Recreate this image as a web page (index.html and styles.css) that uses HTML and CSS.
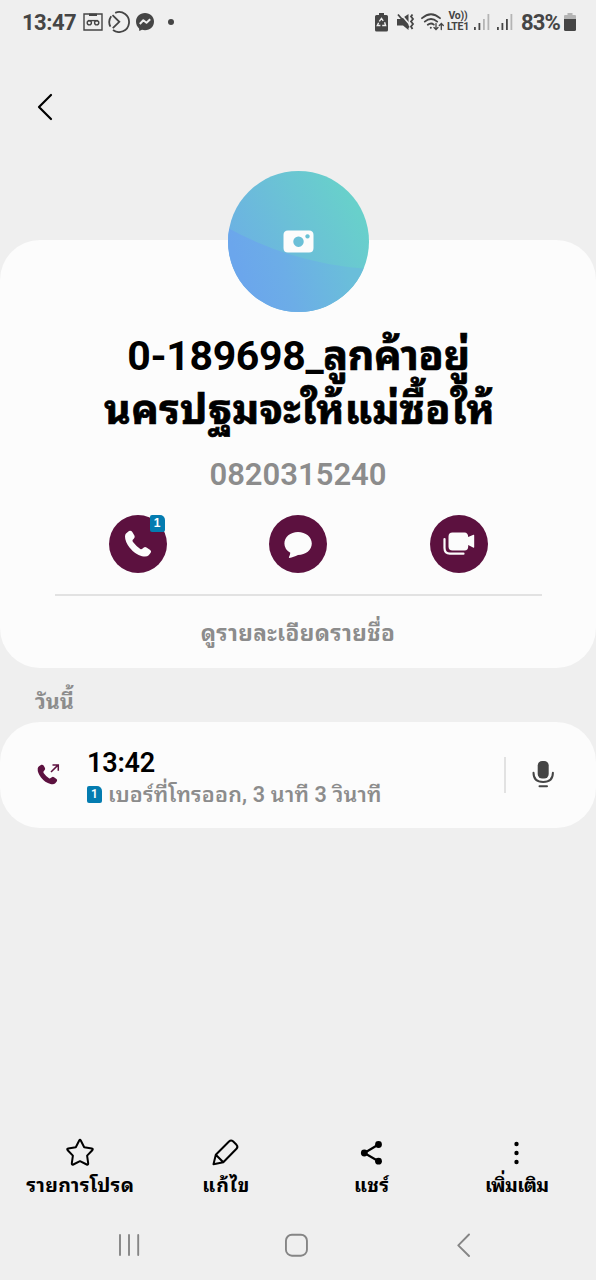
FILE: index.html
```html
<!DOCTYPE html>
<html lang="th">
<head>
  <meta charset="UTF-8">
  <title>รายละเอียดการโทร</title>
  <meta name="viewport" content="width=device-width, initial-scale=1.0">
  <link rel="stylesheet" href="styles.css">
</head>
<body>
  <!-- status bar -->
  <div class="status">
    <div class="status-left">
      <span class="clock">13:47</span>
      <svg class="ic-voicemail" width="20" height="18" viewBox="0 0 20 18" fill="none" stroke="#454545" stroke-width="1.4">
        <path d="M1 1H19V17H1Z"/>
        <path d="M6 1.8H14" stroke-width="2.4"/>
        <circle cx="6.3" cy="9.8" r="2.1"/><circle cx="13.7" cy="9.8" r="2.1"/>
        <path d="M5 7.6H15"/>
      </svg>
      <svg class="ic-ring" width="22" height="22" viewBox="0 0 22 22" fill="none" stroke="#454545" stroke-width="1.8">
        <path d="M7.2 1.8A10 10 0 1 1 5 19"/>
        <path d="M2.4 15.6A10 10 0 0 1 3.2 5.2"/>
        <path d="M4.5 4.2L11.3 10.8L4.8 17.2"/>
      </svg>
      <svg class="ic-messenger" width="20" height="20" viewBox="0 0 20 20">
        <path fill="#454545" d="M10 1C4.7 1 1 4.6 1 9.6c0 3 1.2 5.2 3.1 6.8L4.3 19l2.7-1.2c1 .3 2 .4 3 .4 5.3 0 9-3.6 9-8.6S15.3 1 10 1Z"/>
        <path fill="none" stroke="#efefef" stroke-width="2" stroke-linejoin="round" d="M4.8 12L8.3 8.2L11.5 10.8L15.2 7.2"/>
      </svg>
      <span class="dot"></span>
    </div>
    <div class="status-right">
      <svg class="ic-saver" width="13" height="19" viewBox="0 0 13 19">
        <path fill="#454545" d="M4 0h5v2h2.5q1.5 0 1.5 1.5v13.5q0 1.5-1.5 1.5h-10q-1.5 0-1.5-1.5V3.5Q0 2 1.5 2H4Z"/>
        <path fill="none" stroke="#efefef" stroke-width="1.4" d="M4.3 8.3L6.5 5.4L8.2 7.8M9.600 9.300l1 3.200H7.200M5.400 12.500H2.300L3.600 9.800"/>
      </svg>
      <svg class="ic-mute" width="18" height="18" viewBox="0 0 18 18">
        <path fill="#454545" d="M0 6h4L11.500 1V17L6 12.500H0Z"/>
        <path fill="none" stroke="#efefef" stroke-width="1.6" d="M2.800 0L14 13"/>
        <path fill="none" stroke="#454545" stroke-width="1.8" d="M1 1.500L12 14.500M15.500 1.500l-1.500 2 2 2.500-2 2.500 2 2.500-2 2.500 1.500 2.500"/>
      </svg>
      <svg class="ic-wifi" width="23" height="18" viewBox="0 0 23 18" fill="none" stroke="#454545" stroke-width="1.8" stroke-linecap="round">
        <path d="M1 5.200Q10 -2.800 19 5.200M3.800 8.600Q10 3.300 16.200 8.600M6.800 11.800Q10 9.200 12.800 11.600"/>
        <circle cx="9.8" cy="14.7" r="1" fill="#454545" stroke="none"/>
        <path stroke-width="1.3" d="M15 10.500v6M13 14.500l2 2 2-2M20.300 16.500v-6M18.300 12.500l2-2 2 2"/>
      </svg>
      <div class="volte"><span>Vo))</span><span>LTE1</span></div>
      <svg class="ic-signal" width="16" height="18" viewBox="0 0 16 18" fill="#454545">
        <path d="M0 14h1.800v3H0ZM4.500 10h1.800v7h-1.800Z"/>
        <path fill="#b4b4b4" d="M9 6h1.800v11H9ZM13.500 1h1.800v16h-1.800Z"/>
      </svg>
      <svg class="ic-signal" width="16" height="18" viewBox="0 0 16 18" fill="#454545">
        <path d="M0 14h1.800v3H0ZM4.500 10h1.800v7h-1.800ZM9 6h1.800v11H9Z"/>
        <path fill="#b4b4b4" d="M13.500 1h1.800v16h-1.800Z"/>
      </svg>
      <span class="percent">83%</span>
      <svg width="12" height="19" viewBox="0 0 12 19">
        <path fill="#b4b4b4" d="M3.500 0h5v2H11q1 0 1 1v3H0V3q0-1 1-1h2.500Z"/>
        <path fill="#454545" d="M0 6h12v10.500q0 1.500-1.500 1.500h-9Q0 18 0 16.500Z"/>
      </svg>
    </div>
  </div>

  <div class="topbar">
    <svg width="20" height="30" viewBox="0 0 20 30" fill="none" stroke="#000" stroke-width="2.2" stroke-linecap="round" stroke-linejoin="round">
      <path d="M15 3L3 15L15 27"/>
    </svg>
  </div>

  <!-- contact card -->
  <div class="card contact">
    <div class="avatar">
      <svg width="141" height="141" viewBox="0 0 141 141">
        <defs>
          <linearGradient id="sky" x1="0.1" y1="0.7" x2="0.9" y2="0.25">
            <stop offset="0" stop-color="#6cb0e4"/>
            <stop offset="0.5" stop-color="#6bc0d7"/>
            <stop offset="1" stop-color="#68d0cb"/>
          </linearGradient>
          <linearGradient id="sea" gradientUnits="userSpaceOnUse" x1="10" y1="95" x2="110" y2="65">
            <stop offset="0" stop-color="#6ba6ec"/>
            <stop offset="0.4" stop-color="#6cadE7"/>
            <stop offset="1" stop-color="#6abedA"/>
          </linearGradient>
          <clipPath id="round"><circle cx="70.5" cy="70.5" r="70.5"/></clipPath>
        </defs>
        <g clip-path="url(#round)">
          <path fill="url(#sky)" d="M0 0h141v141H0Z"/>
          <path fill="url(#sea)" d="M0 57Q65 93 141 98V141H0Z"/>
        </g>
        <path fill="#fcfcfc" fill-rule="evenodd" d="M60 59.500H81Q85.500 59.500 85.500 64V77Q85.500 81.500 81 81.500H60Q55.500 81.500 55.500 77V64Q55.500 59.500 60 59.500ZM70.500 65.500a5.200 5.200 0 1 0 .01 0ZM79.500 63.200a2.200 2.200 0 1 0 .01 0Z"/>
      </svg>
    </div>
    <h1 class="name"><span class="name-a">0-189698_<span class="thai">ลูกค้าอยู่</span></span><span class="name-b thai">นครปฐมจะให้แม่ซื้อให้</span></h1>
    <p class="number">0820315240</p>
    <div class="actions">
      <button class="round-btn">
        <svg width="28" height="28" viewBox="0 0 28 28">
          <path fill="#fcfcfc" d="M2 3.500L5 1Q7 .1 8.300 2L10.400 5.500Q11.300 7.200 10 8.500L8.600 10Q8.200 10.800 9 12Q12 16 16.300 18.900Q17.400 19.500 18.300 18.800L19.800 17.500Q21 16.600 22.500 17.500L26.200 19.900Q27.700 21 26.700 22.800L24.700 25.300Q22.700 27.300 18 26.200Q11 24.500 5.500 17.500Q1 11.500 1 6.500Q1 4.500 2 3.500Z"/>
        </svg>
        <span class="sim sim-badge">1</span>
      </button>
      <button class="round-btn">
        <svg width="28" height="28" viewBox="0 0 28 28">
          <path fill="#fcfcfc" d="M14 2C21.700 2 27.800 7 27.800 13.500S21.700 25 14 25C11 26.300 8.300 27.600 5.300 27.900Q4.600 27.800 5 27.100Q6 25.500 6.300 22.800Q.4 19.300 .4 13.500C.4 7 6.300 2 14 2Z"/>
        </svg>
      </button>
      <button class="round-btn">
        <svg width="32" height="26" viewBox="0 0 32 26">
          <path fill="#fcfcfc" d="M9.500 1.500H21.500Q25 1.500 25.200 6L30.500 3.800Q31.200 3.600 31.200 4.500V16Q31.200 17 30.500 16.700L25.200 14V15.500Q25.200 19.500 21.500 19.500H9.500Q5.500 19.500 5.500 15.500V5.500Q5.500 1.500 9.500 1.500Z"/>
          <path fill="none" stroke="#fcfcfc" stroke-width="2.2" stroke-linecap="round" d="M1.500 8V17Q1.500 22.700 7 22.700H20.500"/>
        </svg>
      </button>
    </div>
    <a class="details">ดูรายละเอียดรายชื่อ</a>
  </div>

  <h2 class="day">วันนี้</h2>

  <!-- call log -->
  <div class="card log">
    <svg class="log-icon" width="24" height="22" viewBox="0 0 24 22">
      <path fill="#5c113f" d="M2 2.300L4.300 .8Q5.700 .3 6.600 1.600L8 4Q8.500 5.300 7.500 6.300L6.500 7.400Q6.100 8.200 6.800 9.200Q9 12.300 12 14.200Q12.900 14.700 13.700 14L14.800 13.200Q15.900 12.500 17 13.200L19.500 14.900Q20.600 15.900 19.900 17.200L18.300 19.300Q16.700 20.800 13.500 20Q8 18.500 4 13.500Q.3 8.500 .7 4.500Q.9 3 2 2.300Z"/>
      <path fill="none" stroke="#5c113f" stroke-width="1.5" d="M14 8L21.200 .9M15.500 1H21.300V6.800"/>
    </svg>
    <div class="log-text">
      <div class="log-time">13:42</div>
      <div class="log-info"><span class="sim">1</span><span class="log-desc">เบอร์ที่โทรออก, 3 นาที 3 วินาที</span></div>
    </div>
    <div class="log-mic">
      <svg width="24" height="30" viewBox="0 0 24 30">
        <rect x="6.700" y="1" width="11" height="17.500" rx="4.500" fill="#454545"/>
        <path fill="none" stroke="#454545" stroke-width="2" stroke-linecap="round" d="M2.500 12.800Q2.500 22 12.200 22T21.900 12.800M8.500 26.300H16"/>
      </svg>
    </div>
  </div>

  <!-- bottom actions -->
  <div class="toolbar">
    <div class="tool">
      <svg width="30" height="30" viewBox="0 0 30 30" fill="none" stroke="#000" stroke-width="2" stroke-linejoin="round">
        <path d="M14.100 2.700Q15 1 15.900 2.700L19.200 9.300L26.800 10.500Q28.500 10.900 27.300 12.200L22.100 17.600L23.200 25.300Q23.300 27.200 21.700 26.500L15 23.200L8.300 26.500Q6.700 27.200 6.800 25.300L7.900 17.600L2.700 12.200Q1.500 10.900 3.200 10.500L10.800 9.300Z"/>
      </svg>
      <span class="tool-fav">รายการโปรด</span>
    </div>
    <div class="tool">
      <svg width="30" height="30" viewBox="0 0 30 30" fill="none" stroke="#000" stroke-width="2" stroke-linejoin="round">
        <path d="M3.500 26.200L5.800 16.800L19 3.500Q21 1.700 23 3.300L26.500 6.800Q28.300 8.800 26.500 10.700L13.300 24.300ZM5.800 16.800L13.300 24.300"/>
      </svg>
      <span class="tool-edit">แก้ไข</span>
    </div>
    <div class="tool">
      <svg width="30" height="30" viewBox="0 0 30 30">
        <path fill="none" stroke="#000" stroke-width="2.2" d="M22.500 6.500L8.300 15L22.500 23.200"/>
        <circle cx="22.500" cy="6.500" r="3.400"/><circle cx="8.300" cy="15" r="3.400"/><circle cx="22.500" cy="23.200" r="3.400"/>
      </svg>
      <span class="tool-share">แชร์</span>
    </div>
    <div class="tool">
      <svg width="30" height="30" viewBox="0 0 30 30">
        <circle cx="15.500" cy="6" r="2.200"/><circle cx="15.500" cy="15" r="2.200"/><circle cx="15.500" cy="24" r="2.200"/>
      </svg>
      <span class="tool-more">เพิ่มเติม</span>
    </div>
  </div>

  <div class="navbar">
    <svg width="24" height="24" viewBox="0 0 24 24" fill="none" stroke="#858585" stroke-width="1.9" stroke-linecap="round"><path d="M3 2V22M12 2V22M21.200 2V22"/></svg>
    <svg width="24" height="24" viewBox="0 0 24 24" fill="none" stroke="#858585" stroke-width="1.9"><rect x="0.950" y="1.700" width="21" height="21" rx="6"/></svg>
    <svg width="24" height="24" viewBox="0 0 24 24" fill="none" stroke="#858585" stroke-width="1.9" stroke-linecap="round" stroke-linejoin="round"><path d="M17 1.500L6.300 12.400L17 23"/></svg>
  </div>
</body>
</html>
```
FILE: styles.css
```css
* { box-sizing: border-box; margin: 0; padding: 0; }
body {
  font-family: Roboto, 'Noto Sans Thai Looped', 'Noto Sans Thai', 'Noto Sans', sans-serif;
  background: #efefef;
  color: #000;
  height: 1280px;
  display: flex;
  flex-direction: column;
  overflow: hidden;
}
svg { display: block; flex: none; }
.status {
  height: 44px;
  padding: 0 20px 0 22px;
  display: flex;
  justify-content: space-between;
  align-items: center;
  color: #454545;
}
.status-left, .status-right { display: flex; align-items: center; }
.clock { font-size: 22px; font-weight: 700; width: 61px; letter-spacing: -0.5px; }
.ic-ring { margin-left: 5px; }
.ic-messenger { margin-left: 5px; }
.dot {
  width: 6px;
  height: 6px;
  border-radius: 50%;
  background: #454545;
  margin-left: 13px;
}
.ic-saver { margin-right: 9px; }
.ic-mute { margin-right: 6px; }
.ic-wifi { margin-right: 3px; }
.volte {
  display: flex;
  flex-direction: column;
  align-items: center;
  width: 22px;
  font-size: 10.5px;
  line-height: 12px;
  font-weight: 700;
  letter-spacing: -0.2px;
  margin-right: 5px;
}
.volte span:first-child { line-height: 10px; }
.ic-signal { margin-right: 7px; }
.percent { font-size: 22px; font-weight: 700; width: 40px; margin: 0 3px 0 1px; letter-spacing: -0.9px; }
.topbar { height: 196px; padding: 48px 0 0 36px; }
.card { background: #fcfcfc; border-radius: 40px; flex: none; }
.contact {
  height: 428px;
  display: flex;
  flex-direction: column;
  align-items: center;
}
.avatar { margin-top: -69px; height: 141px; }
.name {
  margin-top: 17px;
  font-size: 41px;
  line-height: 54px;
  font-weight: 700;
  display: flex;
  flex-direction: column;
  align-items: center;
  white-space: nowrap;
}
.name-a { letter-spacing: -0.35px; padding-left: 1px; }
.name-b { letter-spacing: 0.4px; padding-left: 3px; }
.thai { -webkit-text-stroke: 0.7px #000; }
.number {
  margin-top: 20px;
  font-size: 31px;
  line-height: 36px;
  font-weight: 600;
  color: #8c8c8c;
}
.actions {
  width: 379px;
  margin-top: 22px;
  display: flex;
  justify-content: space-between;
}
.round-btn {
  position: relative;
  width: 58px;
  height: 58px;
  border: none;
  border-radius: 50%;
  background: #5c113f;
  display: flex;
  align-items: center;
  justify-content: center;
}
.sim {
  width: 15px;
  height: 17px;
  border-radius: 2px 5px 2px 2px;
  background: #047cb0;
  color: #fff;
  font-size: 12px;
  line-height: 17px;
  font-weight: 600;
  text-align: center;
  flex: none;
}
.sim-badge { position: absolute; top: 0; right: 2px; }
.details {
  width: 487px;
  height: 72px;
  margin-top: 21px;
  border-top: 2px solid #e2e2e2;
  text-align: center;
  font-size: 22.5px;
  letter-spacing: 0.4px;
  line-height: 74px;
  font-weight: 700;
  color: #8c8c8c;
}
.day {
  height: 54px;
  padding-left: 35px;
  font-size: 21.5px;
  line-height: 67px;
  font-weight: 700;
  color: #8c8c8c;
}
.log {
  height: 106px;
  display: flex;
  align-items: center;
  padding: 0 41px 0 37px;
}
.log-text { margin-left: 26px; flex: 1; padding-top: 5px; }
.log-time { font-size: 27px; line-height: 34px; font-weight: 600; letter-spacing: -0.2px; }
.log-info { display: flex; align-items: center; gap: 6px; height: 29px; white-space: nowrap; }
.log-desc {
  padding-bottom: 4px;
  font-size: 21.5px;
  font-weight: 600;
  letter-spacing: 0.2px;
  color: #8c8c8c;
}
.log-mic {
  width: 51px;
  height: 36px;
  border-left: 2px solid #e2e2e2;
  display: flex;
  align-items: center;
  justify-content: flex-end;
}
.toolbar {
  margin-top: auto;
  height: 72px;
  padding: 0 7px;
  display: flex;
}
.tool {
  width: 145.6px;
  display: flex;
  flex-direction: column;
  align-items: center;
  font-size: 19.5px;
  line-height: 36px;
  font-weight: 700;
  white-space: nowrap;
}
.tool-fav { letter-spacing: 0.3px; padding-left: 1px; }
.tool-edit { letter-spacing: 0.9px; padding-left: 2px; }
.tool-share { letter-spacing: 0.5px; padding-left: 2px; }
.tool-more { letter-spacing: -0.6px; padding-left: 1px; }
.navbar {
  height: 70px;
  padding: 23px 120px 0 117px;
  display: flex;
  justify-content: space-between;
}
```
